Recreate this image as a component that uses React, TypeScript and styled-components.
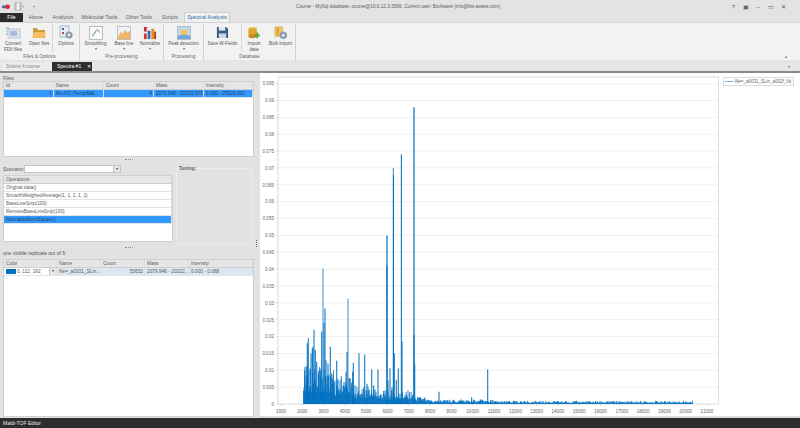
import React from 'react'
import styled, { createGlobalStyle } from 'styled-components'

const GlobalStyle = createGlobalStyle`
  html, body {
    margin: 0;
    padding: 0;
    width: 800px;
    height: 428px;
    overflow: hidden;
    background: #e2e2e2;
  }
  * { box-sizing: border-box; }
`

const Window = styled.div`
  width: 800px;
  height: 428px;
  display: flex;
  flex-direction: column;
  font-family: 'Liberation Sans', Arial, sans-serif;
  color: #4a4a4a;
  background: #e2e2e2;
`

const TitleArea = styled.div`
  height: 22px;
  background: #e3e3e3;
  display: flex;
  flex-direction: column;
`

const TitleBar = styled.div`
  height: 13px;
  display: flex;
  align-items: center;
  padding-left: 2px;
`

const QuickIcons = styled.div`
  display: flex;
  align-items: center;
  gap: 4px;
  width: 294px;
`

const TitleText = styled.div`
  font-size: 4.7px;
  color: #5c5c5c;
  white-space: nowrap;
`

const WindowButtons = styled.div`
  margin-left: auto;
  display: flex;
  align-items: center;
  padding-right: 10px;
  color: #555;
`

const WindowButton = styled.div`
  width: 12.6px;
  font-size: 6px;
  line-height: 8px;
  text-align: center;
`

const RibbonTabs = styled.div`
  height: 9px;
  display: flex;
  align-items: flex-end;
`

const RibbonTab = styled.div<{ $w: number; $file?: boolean; $active?: boolean }>`
  width: ${({ $w }) => $w}px;
  height: ${({ $active }) => ($active ? 10 : 9)}px;
  font-size: 5.2px;
  line-height: 9px;
  text-align: center;
  white-space: nowrap;
  color: ${({ $file, $active }) => ($file ? '#fff' : $active ? '#2f6fa8' : '#5f5f5f')};
  background: ${({ $file, $active }) => ($file ? '#2b2b2b' : $active ? '#f1f1f1' : 'transparent')};
  border: ${({ $active }) => ($active ? '1px solid #cfcfcf' : 'none')};
  border-bottom: none;
  position: relative;
`

const Ribbon = styled.div`
  height: 39px;
  background: #f2f2f2;
  border-top: 1px solid #d2d2d2;
  border-bottom: 1px solid #e6e6e6;
  display: flex;
  position: relative;
`

const RibbonGroup = styled.div<{ $w: number }>`
  width: ${({ $w }) => $w}px;
  border-right: 1px solid #d0d0d0;
  margin-top: 1px;
  display: flex;
  flex-direction: column;
  align-items: stretch;
`

const GroupItems = styled.div`
  flex: 1;
  display: flex;
`

const GroupLabel = styled.div`
  height: 7px;
  font-size: 4.8px;
  line-height: 7px;
  text-align: center;
  color: #666;
  white-space: nowrap;
`

const RibbonButton = styled.div<{ $w: number; $sep?: boolean }>`
  width: ${({ $w }) => $w}px;
  display: flex;
  flex-direction: column;
  align-items: center;
  border-right: ${({ $sep }) => ($sep ? '1px solid #d8d8d8' : 'none')};
  margin-bottom: 1px;
`

const IconSlot = styled.div`
  height: 15px;
  width: 100%;
  display: flex;
  align-items: center;
  justify-content: center;
  margin: 1px 0 1px;
`

const ButtonLabel = styled.div`
  font-size: 4.6px;
  line-height: 5.5px;
  text-align: center;
  color: #555;
  white-space: pre-line;
`

const Caret = styled.div`
  font-size: 4px;
  line-height: 4px;
  color: #666;
`

const CollapseArrow = styled.div`
  position: absolute;
  right: 12px;
  bottom: 1px;
  font-size: 4px;
  color: #777;
`

const DocTabs = styled.div`
  height: 11px;
  margin-top: 1px;
  background: #e6e6e6;
  border-bottom: 2px solid #8a8a8a;
  display: flex;
  padding-left: 2px;
  position: relative;
`

const DocTab = styled.div<{ $active?: boolean }>`
  width: ${({ $active }) => ($active ? 40 : 50)}px;
  font-size: ${({ $active }) => ($active ? 5 : 4.7)}px;
  line-height: 9px;
  padding-left: ${({ $active }) => ($active ? 5 : 4)}px;
  display: flex;
  gap: 6px;
  color: ${({ $active }) => ($active ? '#fff' : '#888')};
  background: ${({ $active }) => ($active ? '#2d2d2d' : '#ececec')};
  white-space: nowrap;
`

const DocMenu = styled.div`
  position: absolute;
  right: 10px;
  top: 0;
  font-size: 4px;
  line-height: 9px;
  color: #666;
`

const Main = styled.div`
  flex: 1;
  min-height: 0;
  display: flex;
`

const LeftPane = styled.div`
  width: 255px;
  display: flex;
  flex-direction: column;
  padding: 2px 0 0 3px;
`

const PaneLabel = styled.div<{ $h?: number; $w?: number }>`
  font-size: 5px;
  line-height: 6px;
  height: ${({ $h }) => $h ?? 6}px;
  width: ${({ $w }) => ($w ? `${$w}px` : 'auto')};
  flex: none;
  color: #555;
  white-space: nowrap;
`

const Grid = styled.div<{ $h: number; $w?: number }>`
  height: ${({ $h }) => $h}px;
  width: ${({ $w }) => ($w ? `${$w}px` : '251px')};
  flex: none;
  background: #fff;
  border: 1px solid #d0d0d0;
  overflow: hidden;
`

const GridRow = styled.div<{ $cols: string; $head?: boolean; $tint?: string }>`
  display: grid;
  grid-template-columns: ${({ $cols }) => $cols};
  height: 8px;
  background: ${({ $head, $tint }) => ($head ? '#e6e6e6' : $tint || '#fff')};
  border-bottom: 1px solid ${({ $head }) => ($head ? '#cfcfcf' : '#e4e4e4')};
`

const Cell = styled.div<{ $right?: boolean; $sel?: boolean }>`
  font-size: 4.8px;
  line-height: 7px;
  padding: 0 1px 0 2px;
  overflow: hidden;
  white-space: nowrap;
  text-align: ${({ $right }) => ($right ? 'right' : 'left')};
  color: ${({ $sel }) => ($sel ? '#1d3f66' : '#5a5a5a')};
  border-right: 1px solid #dcdcdc;
`

const Splitter = styled.div<{ $h: number }>`
  height: ${({ $h }) => $h}px;
  flex: none;
  display: flex;
  align-items: center;
  justify-content: center;
  &::before {
    content: '';
    width: 8px;
    height: 1px;
    border-top: 1px dotted #8d8d8d;
  }
`

const MiddleRow = styled.div`
  display: flex;
  gap: 3px;
  height: 82px;
  flex: none;
`

const ScenarioColumn = styled.div`
  width: 170px;
  padding-top: 1px;
  display: flex;
  flex-direction: column;
`

const ScenarioRow = styled.div`
  display: flex;
  align-items: center;
  gap: 1px;
  height: 9px;
  margin-bottom: 2px;
`

const ComboBox = styled.div<{ $w: number }>`
  width: ${({ $w }) => $w}px;
  height: 8px;
  background: #fff;
  border: 1px solid #c6c6c6;
  display: flex;
  align-items: center;
  justify-content: flex-end;
`

const ComboArrow = styled.div`
  width: 7px;
  height: 100%;
  flex: none;
  background: #e6e6e6;
  border-left: 1px solid #c0c0c0;
  font-size: 3.5px;
  line-height: 6px;
  text-align: center;
  color: #444;
`

const TuningBox = styled.div`
  width: 76px;
  height: 76px;
  margin-top: 5px;
  border: 1px solid #ececec;
  position: relative;
`

const TuningLabel = styled.div`
  position: absolute;
  top: -3px;
  left: 2px;
  font-size: 4.8px;
  line-height: 6px;
  font-weight: bold;
  color: #666;
  background: #e2e2e2;
`

const ReplicaLabel = styled(PaneLabel)`
  line-height: 7px;
  margin-bottom: 2px;
`

const ColorCell = styled.div`
  display: flex;
  align-items: center;
  gap: 1px;
  background: #fff;
  font-size: 4.8px;
  color: #5a5a5a;
  padding-left: 2px;
  height: 7px;
  border-right: 1px solid #dcdcdc;
`

const Swatch = styled.div`
  width: 10px;
  height: 5px;
  flex: none;
  background: #0070c0;
`

const ColorValue = styled.div`
  flex: 1;
  white-space: nowrap;
`

const PaneDivider = styled.div`
  width: 5px;
  display: flex;
  align-items: center;
  justify-content: flex-start;
  padding-left: 1px;
  padding-bottom: 4px;
  &::before {
    content: '';
    width: 1px;
    height: 7px;
    border-left: 1px dotted #666;
  }
`

const ChartPane = styled.div`
  flex: 1;
  min-width: 0;
  background: #fff;
  border-bottom: 2px solid #dadada;
  position: relative;
`

const ChartSvg = styled.svg`
  display: block;
  width: 540px;
  height: 343px;
`

const Legend = styled.div`
  position: absolute;
  left: 463px;
  top: 4px;
  width: 71px;
  height: 9px;
  background: #fff;
  border: 1px solid #dcdcdc;
  display: flex;
  align-items: center;
  gap: 1px;
  padding-left: 1px;
  font-size: 4.5px;
  color: #666;
  white-space: nowrap;
`

const LegendLine = styled.div`
  width: 9px;
  height: 1px;
  flex: none;
  background: #7fb2dc;
`

const StatusBar = styled.div`
  height: 10px;
  flex: none;
  background: #2d2d2d;
  color: #e6e6e6;
  font-size: 5px;
  line-height: 10px;
  padding-left: 3px;
`

const FileIcon = () => (
  <svg width="8" height="6" viewBox="0 0 8 6">
    <rect x="0" y="1.5" width="4" height="2.5" fill="#3c6fb8" />
    <rect x="3" y="0.5" width="5" height="4.5" rx="2" fill="#d8322f" />
    <circle cx="2" cy="4.8" r="0.9" fill="#b8b8b8" />
  </svg>
)

const SaveQuickIcon = () => (
  <svg width="21" height="9" viewBox="0 0 21 9">
    <rect x="1" y="1" width="6" height="7" fill="#cfcfcf" stroke="#8c8c8c" strokeWidth="0.6" />
    <rect x="3" y="1" width="2" height="7" fill="#f2f2f2" />
    <path d="M8.5 4h2L9.5 5.3z" fill="#777" />
    <circle cx="20" cy="4.5" r="0.8" fill="#8a8a8a" />
  </svg>
)

const ConvertIcon = () => (
  <svg width="16" height="14" viewBox="0 0 16 14">
    <rect x="1" y="1" width="3" height="2" fill="#b9c7de" />
    <rect x="1" y="4" width="3" height="2" fill="#c7d2e4" />
    <rect x="1" y="7" width="3" height="2" fill="#b9c7de" />
    <rect x="3" y="3" width="12" height="9" fill="#dfe6f2" stroke="#a8b6cd" strokeWidth="0.7" />
    <rect x="5" y="5" width="7" height="5" fill="#aebcd6" />
  </svg>
)

const FolderIcon = () => (
  <svg width="16" height="14" viewBox="0 0 16 14">
    <path d="M2 2h4l1 2h7v8H2z" fill="#cf9a3c" />
    <path d="M3 6h12l-2 6H1z" fill="#f4bf62" />
  </svg>
)

const OptionsIcon = () => (
  <svg width="16" height="15" viewBox="0 0 16 15">
    <rect x="2" y="1" width="9" height="11" fill="#e8edf5" stroke="#8ea0bd" strokeWidth="0.7" />
    <rect x="4" y="3" width="2" height="2" fill="#3b62a8" />
    <rect x="4" y="7" width="2" height="2" fill="#a94f4f" />
    <circle cx="11" cy="10" r="3.6" fill="#8d99aa" />
    <circle cx="11" cy="10" r="1.4" fill="#e8edf5" />
  </svg>
)

const SmoothIcon = () => (
  <svg width="14" height="14" viewBox="0 0 15 15">
    <rect x="0.5" y="0.5" width="14" height="14" fill="#fbfbfb" stroke="#b9b9b9" />
    <path d="M3 11C6 11 6 4 9 4c1.5 0 1.5 3 3 3" fill="none" stroke="#5aa469" strokeWidth="1" />
    <path d="M3 9c3 1 4-3 6-4" fill="none" stroke="#7d9bc8" strokeWidth="0.6" />
  </svg>
)

const BaseLineIcon = () => (
  <svg width="14" height="14" viewBox="0 0 15 15">
    <rect x="0.5" y="0.5" width="14" height="14" fill="#eef2f7" stroke="#b9b9b9" />
    <path d="M1 12L4 6l2 2 3-4 2 3 3-2v9H1z" fill="#f0b56b" />
  </svg>
)

const NormalizeIcon = () => (
  <svg width="14" height="14" viewBox="0 0 15 15">
    <path d="M1 1h4v1H3l1.5 1.5L3 5h2v1H1z" fill="#c9252c" />
    <rect x="1" y="8" width="3" height="6" fill="#d33a2c" />
    <rect x="5" y="5" width="3" height="9" fill="#2f6db5" />
    <rect x="9" y="3" width="3" height="11" fill="#e58a1f" />
    <rect x="12" y="6" width="2" height="8" fill="#b5341f" />
  </svg>
)

const PeakIcon = () => (
  <svg width="14" height="14" viewBox="0 0 15 15">
    <rect x="0.5" y="0.5" width="14" height="14" fill="#bcd8f2" stroke="#b9b9b9" />
    <circle cx="7.5" cy="7" r="3.4" fill="#f5c453" />
    <path d="M1 14v-3c3-2 9-2 13 0v3z" fill="#6fa7dc" />
  </svg>
)

const SaveIcon = () => (
  <svg width="13" height="13" viewBox="0 0 14 14">
    <path d="M1 1h10l2 2v10H1z" fill="#3d5a80" />
    <rect x="3" y="1" width="7" height="4" fill="#dfe8f2" />
    <rect x="3" y="8" width="8" height="5" fill="#c9d6e6" />
  </svg>
)

const ImportIcon = () => (
  <svg width="14" height="14" viewBox="0 0 15 15">
    <ellipse cx="6" cy="3" rx="4.5" ry="2" fill="#f0c24e" />
    <rect x="1.5" y="3" width="9" height="8" fill="#e0a430" />
    <ellipse cx="6" cy="11" rx="4.5" ry="2" fill="#c98c22" />
    <path d="M10 7h2v2h2v2h-2v2h-2v-2H8V9h2z" fill="#5aa53c" />
  </svg>
)

const BulkIcon = () => (
  <svg width="14" height="14" viewBox="0 0 15 15">
    <rect x="1" y="1" width="8" height="10" fill="#f0c469" stroke="#cf9a3c" strokeWidth="0.6" />
    <rect x="3" y="2" width="2" height="8" fill="#e0952f" />
    <circle cx="10" cy="10" r="4" fill="#8d9db3" />
    <circle cx="10" cy="10" r="1.5" fill="#e9eef5" />
  </svg>
)

// chart geometry, in pane coordinates (pane starts at x=260, y=73)
const PLOT_LEFT = 18
const PLOT_RIGHT = 458.5
const PLOT_TOP = 4
const PLOT_BOTTOM = 331
const toX = (mass: number) => 21 + (mass - 1000) * 0.0213
const toY = (v: number) => PLOT_BOTTOM - (v / 0.005) * 16.86

const yTicks = Array.from({ length: 20 }, (_, i) => i * 0.005)
const yMinor = Array.from({ length: 96 }, (_, i) => i * 0.001)
const xTicks = Array.from({ length: 21 }, (_, i) => 1000 + i * 1000)
const xMinor = Array.from({ length: 101 }, (_, i) => 1000 + i * 200)

// peaks read off the spectrum: [x * 3 in the crop, height]
const peaks: [number, number][] = [
  [146, 0.004], [150, 0.011], [155, 0.0112], [157, 0.018], [160, 0.0195], [165, 0.0105],
  [168, 0.015], [172, 0.0165], [174, 0.017], [177, 0.022], [181, 0.016], [185, 0.0125],
  [190, 0.009], [196, 0.01], [200, 0.0215], [204, 0.0402], [207, 0.024], [210, 0.0283],
  [213, 0.013], [219, 0.012], [226, 0.017], [231, 0.006], [237, 0.0065], [245, 0.0128],
  [252, 0.0045], [259, 0.0082], [267, 0.0065], [273, 0.0095], [276, 0.0155], [279, 0.0312],
  [285, 0.0075], [293, 0.0095], [295, 0.0122], [300, 0.0055], [312, 0.0151], [318, 0.003],
  [329, 0.0147], [336, 0.006], [341, 0.004], [350, 0.0102], [356, 0.0055], [369, 0.0102],
  [378, 0.0028], [390, 0.004], [396, 0.05], [399, 0.007], [405, 0.0106], [411, 0.005],
  [415, 0.07], [418, 0.015], [424, 0.0072], [430, 0.0105], [435, 0.003], [439, 0.074],
  [441, 0.0185], [450, 0.002], [458, 0.002], [477, 0.088], [479, 0.012], [490, 0.0018],
  [500, 0.0013], [528, 0.0008], [545, 0.0008], [552, 0.0036], [565, 0.0009], [618, 0.0013],
  [621, 0.0011], [650, 0.002], [665, 0.0005], [676, 0.0014], [698, 0.0102], [720, 0.0009],
  [762, 0.0007], [778, 0.0009], [797, 0.0008]
]

const pseudo = (i: number) => {
  const s = Math.sin(i * 12.9898) * 43758.5453
  return s - Math.floor(s)
}

// one stick per half pixel, height follows the envelope of the spectrum
const fillLine = () => {
  let d = ''
  for (let px = toX(2080); px < toX(20320); px += 0.5) {
    const mass = 1000 + (px - 21) / 0.0213
    let floor = 0.0005
    if (mass < 3500) floor = 0.0058
    else if (mass < 4400) floor = 0.0042
    else if (mass < 5500) floor = 0.0028
    else if (mass < 7300) floor = 0.0022
    else if (mass < 7800) floor = 0.0012
    else if (mass < 11000) floor = 0.0007
    const r = pseudo(Math.round(px * 2))
    const v = floor * (0.6 + r * r * 1.3)
    d += `M${px.toFixed(1)} ${PLOT_BOTTOM}V${toY(v).toFixed(1)}`
  }
  return d
}

const formatY = (v: number) => (v === 0 ? '0' : String(Number(v.toFixed(3))))

const peakWidth = (v: number) => (v > 0.08 || v === 0.05 ? 2 : v > 0.03 ? 1.3 : 1.2)

const Spectrum = () => (
  <ChartSvg viewBox="0 0 540 343">
    <rect x={PLOT_LEFT} y={PLOT_TOP} width={PLOT_RIGHT - PLOT_LEFT} height={PLOT_BOTTOM - PLOT_TOP} fill="#fff" stroke="#dcdcdc" />
    {yMinor.map((t) => (
      <line key={t} x1={PLOT_LEFT - 1} x2={PLOT_LEFT} y1={toY(t)} y2={toY(t)} stroke="#d8d8d8" strokeWidth="0.4" />
    ))}
    {xMinor.map((t) => (
      <line key={t} x1={toX(t)} x2={toX(t)} y1={PLOT_BOTTOM} y2={PLOT_BOTTOM + 1} stroke="#d0d0d0" strokeWidth="0.4" />
    ))}
    {yTicks.map((t) => (
      <g key={t}>
        {t > 0 && <line x1={PLOT_LEFT} x2={PLOT_RIGHT} y1={toY(t)} y2={toY(t)} stroke="#f1f1f1" />}
        <line x1={PLOT_LEFT - 2} x2={PLOT_LEFT} y1={toY(t)} y2={toY(t)} stroke="#c8c8c8" strokeWidth="0.6" />
        <text x={PLOT_LEFT - 4} y={toY(t) + 1.8} textAnchor="end" fontSize="4.6" fill="#666" fontFamily="Liberation Sans">
          {formatY(t)}
        </text>
      </g>
    ))}
    {xTicks.map((t) => (
      <g key={t}>
        <line x1={toX(t)} x2={toX(t)} y1={PLOT_BOTTOM} y2={PLOT_BOTTOM + 2} stroke="#c8c8c8" strokeWidth="0.6" />
        <text x={toX(t)} y={PLOT_BOTTOM + 9} textAnchor="middle" fontSize="4.6" fill="#666" fontFamily="Liberation Sans">
          {t}
        </text>
      </g>
    ))}
    <path d={fillLine()} stroke="#0070c0" strokeWidth="0.8" fill="none" />
    {peaks.map(([z, v]) => (
      <line
        key={z}
        x1={z / 3 - 5}
        x2={z / 3 - 5}
        y1={PLOT_BOTTOM}
        y2={toY(v)}
        stroke="#0070c0"
        strokeWidth={peakWidth(v)}
        strokeOpacity={v > 0.03 ? 0.6 : 0.85}
      />
    ))}
    <line x1={127} x2={127} y1={PLOT_BOTTOM} y2={toY(0.041)} stroke="#0070c0" strokeWidth="1" />
    <line x1={133.5} x2={133.5} y1={PLOT_BOTTOM} y2={toY(0.068)} stroke="#0070c0" strokeWidth="1" />
    <line x1={141.5} x2={141.5} y1={PLOT_BOTTOM} y2={toY(0.074)} stroke="#0070c0" strokeWidth="1" strokeOpacity="0.7" />
    <line x1={154} x2={154} y1={PLOT_BOTTOM} y2={toY(0.0205)} stroke="#0070c0" strokeWidth="1" />
  </ChartSvg>
)

const filesCols = '50px 50px 50px 50px 1fr'
const opsRows = ['Original data()', 'SmoothWeightedAverage(1, 1, 1, 1, 1)', 'BaseLineSnip(100)', 'RemoveBaseLineSnip(100)', 'NormalizeSumSquare()']
const replicaCols = '53px 44px 44px 44px 1fr'

const App = () => (
  <Window>
    <GlobalStyle />
    <TitleArea>
      <TitleBar>
        <QuickIcons>
          <FileIcon />
          <SaveQuickIcon />
        </QuickIcons>
        <TitleText>Course - MySql database: course@10.0.12.3:3306. Current user: BioAware (info@bio-aware.com)</TitleText>
        <WindowButtons>
          <WindowButton>?</WindowButton>
          <WindowButton>▣</WindowButton>
          <WindowButton>–</WindowButton>
          <WindowButton>▭</WindowButton>
          <WindowButton>✕</WindowButton>
        </WindowButtons>
      </TitleBar>
      <RibbonTabs>
        <RibbonTab $w={23} $file>File</RibbonTab>
        <RibbonTab $w={26}>Home</RibbonTab>
        <RibbonTab $w={28}>Analytics</RibbonTab>
        <RibbonTab $w={45}>Molecular Tools</RibbonTab>
        <RibbonTab $w={34}>Other Tools</RibbonTab>
        <RibbonTab $w={28}>Scripts</RibbonTab>
        <RibbonTab $w={46} $active>Spectral Analysis</RibbonTab>
      </RibbonTabs>
    </TitleArea>
    <Ribbon>
      <RibbonGroup $w={80}>
        <GroupItems>
          <RibbonButton $w={26}>
            <IconSlot><ConvertIcon /></IconSlot>
            <ButtonLabel>{'Convert\nFDII files'}</ButtonLabel>
          </RibbonButton>
          <RibbonButton $w={27} $sep>
            <IconSlot><FolderIcon /></IconSlot>
            <ButtonLabel>Open files</ButtonLabel>
          </RibbonButton>
          <RibbonButton $w={26}>
            <IconSlot><OptionsIcon /></IconSlot>
            <ButtonLabel>Options</ButtonLabel>
          </RibbonButton>
        </GroupItems>
        <GroupLabel>Files &amp; Options</GroupLabel>
      </RibbonGroup>
      <RibbonGroup $w={84}>
        <GroupItems>
          <RibbonButton $w={31}>
            <IconSlot><SmoothIcon /></IconSlot>
            <ButtonLabel>Smoothing</ButtonLabel>
            <Caret>▾</Caret>
          </RibbonButton>
          <RibbonButton $w={26}>
            <IconSlot><BaseLineIcon /></IconSlot>
            <ButtonLabel>Base line</ButtonLabel>
            <Caret>▾</Caret>
          </RibbonButton>
          <RibbonButton $w={26}>
            <IconSlot><NormalizeIcon /></IconSlot>
            <ButtonLabel>Normalize</ButtonLabel>
            <Caret>▾</Caret>
          </RibbonButton>
        </GroupItems>
        <GroupLabel>Pre-processing</GroupLabel>
      </RibbonGroup>
      <RibbonGroup $w={40}>
        <GroupItems>
          <RibbonButton $w={39}>
            <IconSlot><PeakIcon /></IconSlot>
            <ButtonLabel>Peak detection</ButtonLabel>
            <Caret>▾</Caret>
          </RibbonButton>
        </GroupItems>
        <GroupLabel>Processing</GroupLabel>
      </RibbonGroup>
      <RibbonGroup $w={92}>
        <GroupItems>
          <RibbonButton $w={38} $sep>
            <IconSlot><SaveIcon /></IconSlot>
            <ButtonLabel>Save W-Fields</ButtonLabel>
          </RibbonButton>
          <RibbonButton $w={24}>
            <IconSlot><ImportIcon /></IconSlot>
            <ButtonLabel>{'Import\ndata'}</ButtonLabel>
          </RibbonButton>
          <RibbonButton $w={29}>
            <IconSlot><BulkIcon /></IconSlot>
            <ButtonLabel>Bulk import</ButtonLabel>
          </RibbonButton>
        </GroupItems>
        <GroupLabel>Database</GroupLabel>
      </RibbonGroup>
      <CollapseArrow>▲</CollapseArrow>
    </Ribbon>
    <DocTabs>
      <DocTab>Strains 4 course</DocTab>
      <DocTab $active>
        <span>Spectra #1</span>
        <span>✕</span>
      </DocTab>
      <DocMenu>▾</DocMenu>
    </DocTabs>
    <Main>
      <LeftPane>
        <PaneLabel>Files:</PaneLabel>
        <Grid $h={76}>
          <GridRow $cols={filesCols} $head>
            <Cell>Id</Cell>
            <Cell>Name</Cell>
            <Cell>Count</Cell>
            <Cell>Mass</Cell>
            <Cell>Intensity</Cell>
          </GridRow>
          <GridRow $cols={filesCols} $tint="#3399ff">
            <Cell $right $sel>1</Cell>
            <Cell $sel>file:///C:/Temp/Mal...</Cell>
            <Cell $right $sel>4</Cell>
            <Cell $sel>2079.946 - 20322.975</Cell>
            <Cell $sel>0.000 - 25626.000</Cell>
          </GridRow>
        </Grid>
        <Splitter $h={6} />
        <MiddleRow>
          <ScenarioColumn>
            <ScenarioRow>
              <PaneLabel $w={20}>Scenario:</PaneLabel>
              <ComboBox $w={97}>
                <ComboArrow>▾</ComboArrow>
              </ComboBox>
            </ScenarioRow>
            <Grid $h={67} $w={170}>
              <GridRow $cols="1fr" $head>
                <Cell>Operations</Cell>
              </GridRow>
              {opsRows.map((op, i) => (
                <GridRow key={op} $cols="1fr" $tint={i === 4 ? '#3399ff' : undefined}>
                  <Cell $sel={i === 4}>{op}</Cell>
                </GridRow>
              ))}
            </Grid>
          </ScenarioColumn>
          <TuningBox>
            <TuningLabel>Tuning:</TuningLabel>
          </TuningBox>
        </MiddleRow>
        <Splitter $h={5} />
        <ReplicaLabel $h={7}>one visible replicate out of 5:</ReplicaLabel>
        <Grid $h={158}>
          <GridRow $cols={replicaCols} $head>
            <Cell>Color</Cell>
            <Cell>Name</Cell>
            <Cell>Count</Cell>
            <Cell>Mass</Cell>
            <Cell>Intensity</Cell>
          </GridRow>
          <GridRow $cols={replicaCols} $tint="#dbe8f4">
            <ColorCell>
              <Swatch />
              <ColorValue>0, 112, 192</ColorValue>
              <ComboArrow>▾</ComboArrow>
            </ColorCell>
            <Cell>file=_a0031_SLin...</Cell>
            <Cell $right>53652</Cell>
            <Cell>2079.946 - 20322...</Cell>
            <Cell>0.000 - 0.088</Cell>
          </GridRow>
        </Grid>
      </LeftPane>
      <PaneDivider />
      <ChartPane>
        <Spectrum />
        <Legend>
          <LegendLine />
          <span>file=_a0031_SLin_a002f_fid</span>
        </Legend>
      </ChartPane>
    </Main>
    <StatusBar>Maldi-TOF Editor</StatusBar>
  </Window>
)

export default App
